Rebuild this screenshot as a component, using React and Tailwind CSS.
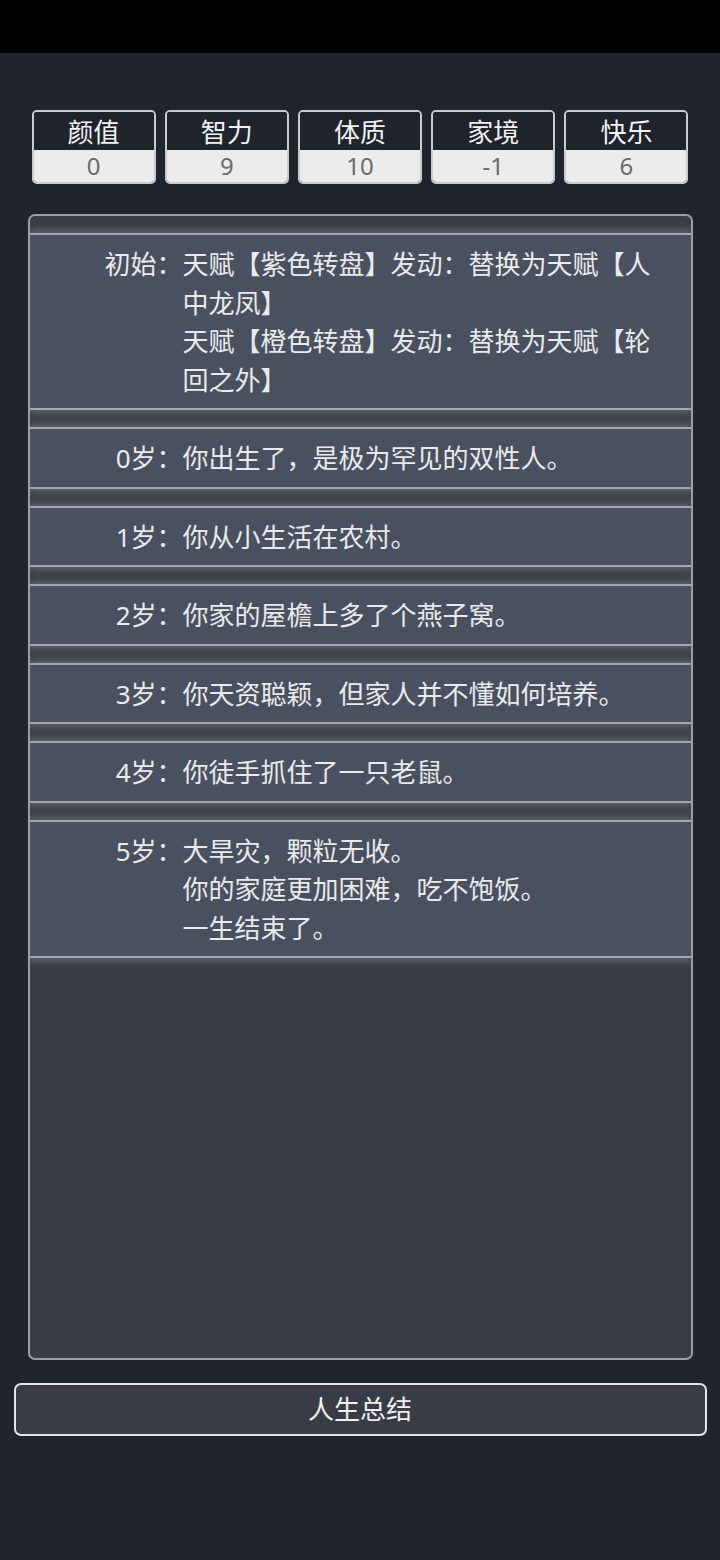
import React from "react";

const stats = [
  ["颜值", "0"],
  ["智力", "9"],
  ["体质", "10"],
  ["家境", "-1"],
  ["快乐", "6"],
];

const events = [
  {
    label: "初始：",
    lines: [
      "天赋【紫色转盘】发动：替换为天赋【人中龙凤】",
      "天赋【橙色转盘】发动：替换为天赋【轮回之外】",
    ],
  },
  { label: "0岁：", lines: ["你出生了，是极为罕见的双性人。"] },
  { label: "1岁：", lines: ["你从小生活在农村。"] },
  { label: "2岁：", lines: ["你家的屋檐上多了个燕子窝。"] },
  { label: "3岁：", lines: ["你天资聪颖，但家人并不懂如何培养。"] },
  { label: "4岁：", lines: ["你徒手抓住了一只老鼠。"] },
  {
    label: "5岁：",
    lines: ["大旱灾，颗粒无收。", "你的家庭更加困难，吃不饱饭。", "一生结束了。"],
  },
];

const font = {
  fontFamily: '"Noto Sans", "Noto Sans CJK SC", sans-serif',
};

export default function App() {
  return (
    <div
      className="w-[720px] h-[1560px] bg-[#20242d] flex flex-col items-center"
      style={font}
    >
      <div className="w-full h-[53px] bg-black shrink-0" />

      <div className="mt-[57px] w-[657px] grid grid-cols-5 gap-[9px]">
        {stats.map(([k, v]) => (
          <div
            key={k}
            className="h-[74px] rounded-[5px] border-2 border-[#c9cbce] overflow-hidden flex flex-col"
          >
            <div className="h-[38px] bg-[#1f232c] text-[#f2f2f2] text-[26px] leading-[40px] text-center">
              {k}
            </div>
            <div className="flex-1 bg-[#ececec] text-[#6a6a6a] text-[24px] leading-[32px] text-center">
              {v}
            </div>
          </div>
        ))}
      </div>

      <div className="mt-[30px] w-[665px] h-[1146px] rounded-[7px] border-2 border-[#9a9ea5] bg-[#393c46] pt-[17px] flex flex-col gap-[17px] overflow-hidden">
        {events.map((e, i) => (
          <div
            key={i}
            className="bg-[#495160] border-y-2 border-[#a3a7ad] pt-[10px] pb-[9px] grid grid-cols-[153px_1fr] text-[26px] leading-[38.5px] text-[#e9eaec] shadow-[0_0_9px_2px_rgba(150,152,156,0.55)]"
          >
            <div className="text-right">{e.label}</div>
            <div className="pr-[16px]">
              {e.lines.map((l, j) => (
                <div key={j}>{l}</div>
              ))}
            </div>
          </div>
        ))}
      </div>

      <button className="mt-[23px] w-[693px] h-[53px] rounded-[7px] border-2 border-[#e4e4e4] bg-[#393c46] text-[#f0f0f0] text-[26px]">
        人生总结
      </button>
    </div>
  );
}
